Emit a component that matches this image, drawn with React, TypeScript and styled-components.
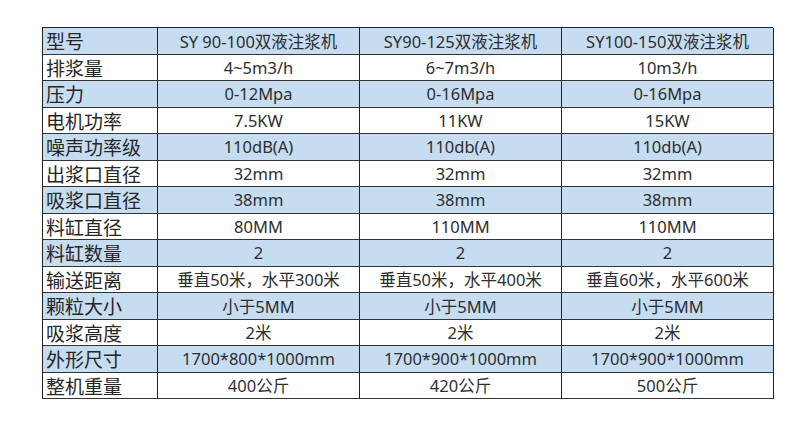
import React from "react";
import styled, { createGlobalStyle } from "styled-components";

const GlobalStyle = createGlobalStyle`
  html, body { margin: 0; padding: 0; background: #ffffff; }
  body { font-family: "Noto Sans", "Noto Sans CJK SC", sans-serif; }
`;

const Page = styled.div`
  width: 807px;
  height: 426px;
  padding: 27px 0 0 42px;
  box-sizing: border-box;
  background: #ffffff;
`;

const Table = styled.div`
  display: grid;
  width: 731px;
  border-top: 1px solid #222;
  border-left: 1px solid #222;
  box-sizing: border-box;
`;

const Row = styled.div<{ $alt: boolean }>`
  display: grid;
  grid-template-columns: 115px 202px 202px 212px;
  height: 26.5px;
  background: ${(p) => (p.$alt ? "#c6dcf1" : "#ffffff")};
`;

const Label = styled.div`
  border-right: 1px solid #222;
  border-bottom: 1px solid #333;
  padding-left: 3px;
  display: flex;
  align-items: center;
  font-family: "Noto Sans CJK SC", sans-serif;
  font-size: 19px;
  color: #262626;
  white-space: nowrap;
  overflow: hidden;
`;

const Cell = styled.div`
  border-right: 1px solid #222;
  border-bottom: 1px solid #333;
  display: flex;
  align-items: center;
  justify-content: center;
  font-family: "Noto Sans", "Noto Sans CJK SC", sans-serif;
  font-size: 16.5px;
  color: #2e2e2e;
  white-space: nowrap;
  overflow: hidden;
`;

const rows: [string, string, string, string][] = [
  ["型号", "SY 90-100双液注浆机", "SY90-125双液注浆机", "SY100-150双液注浆机"],
  ["排浆量", "4~5m3/h", "6~7m3/h", "10m3/h"],
  ["压力", "0-12Mpa", "0-16Mpa", "0-16Mpa"],
  ["电机功率", "7.5KW", "11KW", "15KW"],
  ["噪声功率级", "110dB(A)", "110db(A)", "110db(A)"],
  ["出浆口直径", "32mm", "32mm", "32mm"],
  ["吸浆口直径", "38mm", "38mm", "38mm"],
  ["料缸直径", "80MM", "110MM", "110MM"],
  ["料缸数量", "2", "2", "2"],
  ["输送距离", "垂直50米，水平300米", "垂直50米，水平400米", "垂直60米，水平600米"],
  ["颗粒大小", "小于5MM", "小于5MM", "小于5MM"],
  ["吸浆高度", "2米", "2米", "2米"],
  ["外形尺寸", "1700*800*1000mm", "1700*900*1000mm", "1700*900*1000mm"],
  ["整机重量", "400公斤", "420公斤", "500公斤"],
];

export default function App() {
  return (
    <Page>
      <GlobalStyle />
      <Table>
        {rows.map((r, i) => (
          <Row key={i} $alt={i % 2 === 0}>
            <Label>{r[0]}</Label>
            <Cell>{r[1]}</Cell>
            <Cell>{r[2]}</Cell>
            <Cell>{r[3]}</Cell>
          </Row>
        ))}
      </Table>
    </Page>
  );
}
